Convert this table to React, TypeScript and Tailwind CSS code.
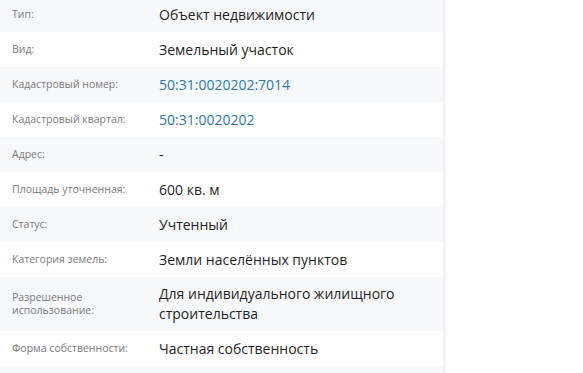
const ROWS: { label: string; value: string; link?: boolean }[] = [
  { label: 'Тип:', value: 'Объект недвижимости' },
  { label: 'Вид:', value: 'Земельный участок' },
  { label: 'Кадастровый номер:', value: '50:31:0020202:7014', link: true },
  { label: 'Кадастровый квартал:', value: '50:31:0020202', link: true },
  { label: 'Адрес:', value: '-' },
  { label: 'Площадь уточненная:', value: '600 кв. м' },
  { label: 'Статус:', value: 'Учтенный' },
  { label: 'Категория земель:', value: 'Земли населённых пунктов' },
  { label: 'Разрешенное использование:', value: 'Для индивидуального жилищного строительства' },
  { label: 'Форма собственности:', value: 'Частная собственность' },
  { label: '', value: '' },
]

export default function App() {
  return (
    <div className="h-[373px] w-[583px] overflow-hidden bg-white" style={{ fontFamily: '"Open Sans", "Noto Sans", sans-serif' }}>
      <div className="-mt-[3px] w-[443px] bg-white shadow-[2px_0_4px_rgba(0,0,0,0.08)]">
        {ROWS.map((r, i) => (
          <div key={i} className={`flex items-center py-[7px] min-h-[35px] ${i % 2 === 0 ? 'bg-[#f7f8fa]' : 'bg-white'}`}>
            <div className="w-[159px] shrink-0 pl-3 pr-5 text-[10.5px] leading-[13px] text-[#7a7a7a]">{r.label}</div>
            <div className={`flex-1 pr-10 text-[14px] leading-[20px] ${r.link ? 'text-[#2a78b0]' : 'text-[#1f1f1f]'}`}>{r.value}</div>
          </div>
        ))}
      </div>
    </div>
  )
}
